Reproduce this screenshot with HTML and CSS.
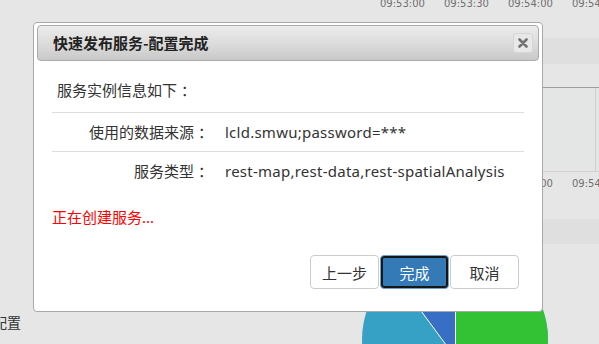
FILE: index.html
```html
<!DOCTYPE html>
<html lang="zh-CN">
<head>
<meta charset="utf-8">
<title>快速发布服务-配置完成</title>
<link rel="stylesheet" href="styles.css">
</head>
<body>
<div class="page">
  <div class="left-col">
    <div class="legend-label">配置</div>
  </div>
  <div class="right-col">
    <div class="axis axis-top"><span>09:53:00</span><span>09:53:30</span><span>09:54:00</span><span>09:54:30</span></div>
    <div class="band band-top"></div>
    <div class="plot"></div>
    <div class="axis axis-bottom"><span>09:53:00</span><span>09:53:30</span><span>09:54:00</span><span>09:54:30</span></div>
    <div class="band band-bottom"></div>
    <svg class="pie" width="239" height="100" viewBox="0 0 239 100">
      <defs>
        <clipPath id="pieClip"><circle cx="95" cy="96" r="93"/></clipPath>
      </defs>
      <g clip-path="url(#pieClip)">
        <rect x="0" y="0" width="239" height="100" fill="#37a0c5"/>
        <polygon points="95,-20 95,113 -3,-20" fill="#366fc4"/>
        <rect x="95" y="0" width="144" height="100" fill="#33c234"/>
        <line x1="95.5" y1="0" x2="95.5" y2="100" stroke="#ffffff" stroke-width="1"/>
        <line x1="-3" y1="-20" x2="95" y2="113" stroke="#ffffff" stroke-width="1"/>
      </g>
    </svg>
  </div>
</div>

<div class="dialog">
  <div class="dialog-header">
    <span class="dialog-title">快速发布服务-配置完成</span>
    <button class="close-btn" type="button" aria-label="关闭">
      <svg width="10" height="10" viewBox="0 0 10 10"><path d="M1.5 1.5 L8.5 8.5 M8.5 1.5 L1.5 8.5" stroke="#727272" stroke-width="2.6" stroke-linecap="round"/></svg>
    </button>
  </div>
  <div class="dialog-body">
    <p class="intro">服务实例信息如下<span class="colon">：</span></p>
    <div class="info-row">
      <div class="info-label">使用的数据来源<span class="colon">：</span></div>
      <div class="info-value">lcld.smwu;password=***</div>
    </div>
    <div class="info-row">
      <div class="info-label">服务类型<span class="colon">：</span></div>
      <div class="info-value">rest-map,rest-data,rest-spatialAnalysis</div>
    </div>
    <p class="status">正在创建服务...</p>
    <div class="actions">
      <button class="btn" type="button">上一步</button>
      <button class="btn btn-primary is-focused" type="button">完成</button>
      <button class="btn" type="button">取消</button>
    </div>
  </div>
</div>
</body>
</html>
```

FILE: styles.css
```css
* { box-sizing: border-box; }

html, body {
  margin: 0;
  padding: 0;
}

body {
  width: 599px;
  height: 344px;
  overflow: hidden;
  position: relative;
  background: #e6e6e6;
  font-family: "Noto Sans", "Noto Sans CJK SC", sans-serif;
  color: #333;
}

/* ---------- background dashboard ---------- */
.page {
  display: flex;
  height: 344px;
}

.left-col {
  width: 360px;
  display: flex;
  flex-direction: column;
  justify-content: flex-end;
  overflow: hidden;
}

.legend-label {
  font-family: "Noto Sans CJK SC", sans-serif;
  font-size: 14px;
  line-height: 16px;
  color: #333;
  margin-left: -7px;
  margin-bottom: 14px;
}

.right-col {
  flex: 1;
  display: flex;
  flex-direction: column;
  overflow: hidden;
}

.axis {
  height: 10px;
  line-height: 10px;
  padding-left: 20px;
  white-space: nowrap;
  font-family: "DejaVu Sans", sans-serif;
  font-size: 10px;
  color: #6f6f6f;
}

.axis span {
  display: inline-block;
  width: 64px;
}

.axis-top { margin-top: -1px; }

.band {
  background: #dfdfdf;
}

.band-top {
  margin-top: 29px;
  height: 28px;
}

.plot {
  margin-top: 23px;
  height: 90px;
  border-top: 1px solid #9c9c9c;
  border-bottom: 1px solid #d2d2d2;
  background-color: #e4e5e5;
  background-image: linear-gradient(to right, transparent 235px, #cfcfcf 235px, #cfcfcf 236px, transparent 236px);
}

.axis-bottom { margin-top: 7px; }

.band-bottom {
  margin-top: 30px;
  height: 27px;
}

.pie {
  display: block;
  flex: none;
}

/* ---------- dialog ---------- */
.dialog {
  position: absolute;
  left: 33px;
  top: 22px;
  width: 510px;
  height: 290px;
  padding: 2px 3px;
  background: #fff;
  border: 1px solid #a9a9a9;
  border-radius: 4px;
}

.dialog-header {
  height: 36px;
  display: flex;
  align-items: center;
  justify-content: space-between;
  padding: 0 5px 0 15px;
  border: 1px solid #aaaaaa;
  border-radius: 4px;
  background: linear-gradient(to bottom, #ececec 0%, #dcdcdc 50%, #c9c9c9 100%);
}

.dialog-title {
  font-family: "Noto Sans CJK SC", sans-serif;
  font-size: 15px;
  font-weight: bold;
  color: #222;
  line-height: 20px;
}

.close-btn {
  width: 20px;
  height: 20px;
  padding: 0;
  display: flex;
  align-items: center;
  justify-content: center;
  background: #e8e8e8;
  border: 1px solid #d6d6d6;
  border-radius: 3px;
}

.dialog-body {
  padding: 0 15px;
}

/* centre the full-width colon in its cell, keeping its advance */
.colon {
  display: inline-block;
  padding-left: 4px;
  margin-right: -4px;
}

.intro {
  margin: 19px 0 12px;
  padding-left: 5px;
  font-size: 15px;
  line-height: 20px;
}

.info-row {
  display: flex;
  align-items: center;
  height: 39px;
  border-top: 1px solid #dedede;
  font-size: 15px;
  line-height: 20px;
}

.info-label {
  width: 157px;
  text-align: right;
}

.info-value {
  padding-left: 16px;
  white-space: nowrap;
  letter-spacing: 0.25px;
}

.status {
  margin: 17px 0 0;
  font-size: 15px;
  line-height: 20px;
  color: #ff0000;
}

.actions {
  margin-top: 28px;
  padding-right: 5px;
  display: flex;
  justify-content: flex-end;
  gap: 1px;
}

.btn {
  width: 69px;
  height: 34px;
  padding: 0;
  font-family: "Noto Sans CJK SC", sans-serif;
  font-size: 15px;
  color: #333;
  background: #fff;
  border: 1px solid #cccccc;
  border-radius: 4px;
}

.btn-primary {
  color: #fff;
  background: #337ab7;
  border-color: #2e6da4;
}

.btn-primary.is-focused {
  border: 1px solid #6d9fd0;
  box-shadow: inset 0 0 0 2px #161616;
}
```
